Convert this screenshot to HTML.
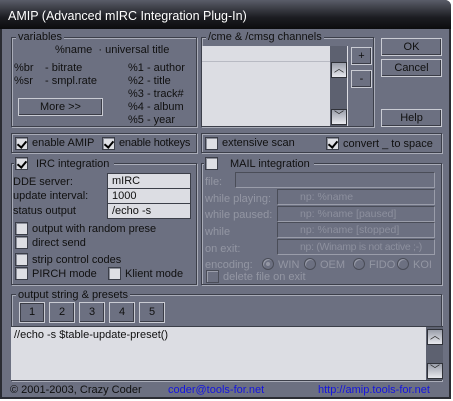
<!DOCTYPE html><html><head><style>
*{margin:0;padding:0;box-sizing:border-box}
body{width:453px;height:401px;background:#fff;position:relative;overflow:hidden;font-family:"Liberation Sans",sans-serif;font-size:11px;color:#101010}
.a{position:absolute}
#win{left:0;top:0;width:451px;height:399px;background:#6c7081;border:2px solid #2a2c33;border-radius:0 6px 0 0}
#title{left:0;top:0;width:451px;height:29px;background:linear-gradient(#5a5d69,#1c1d22 60%,#0c0c0e);color:#fff;font-size:12.5px;padding:9px 0 0 8px;border-radius:0 6px 0 0}
.g{position:absolute;border:1px solid #3c3f4a;box-shadow:inset 1px 1px 0 #a9acb8,1px 1px 0 #a9acb8}
.l{position:absolute;background:#6c7081;padding:0 2px;line-height:12px}
.t{position:absolute;white-space:nowrap;line-height:13px}
.cb{position:absolute;width:13px;height:13px;background:#dedfe4;border:1px solid #3b3e48;box-shadow:inset 1px 1px 0 #8c8f9a}
.cb.k::after{content:"";position:absolute;left:3px;top:1px;width:4px;height:7px;border:solid #000;border-width:0 2px 2px 0;transform:rotate(40deg)}
.cb.d{background:#6c7081;border-color:#4a4d58;box-shadow:inset 1px 1px 0 #9a9daa}
.btn{position:absolute;border:1px solid #c9cbd3;box-shadow:inset -1px -1px 0 #3a3c46;text-align:center;line-height:16px;background:#6c7081}
.in{position:absolute;background:#dcdde3;border:1px solid #3b3e48;padding-left:4px;line-height:14px}
.di{position:absolute;border:1px solid #4a4d58;border-right-color:#9a9daa;border-bottom-color:#9a9daa;color:#8d909e;padding-left:22px;line-height:14px;font-size:10.5px;white-space:nowrap;overflow:hidden}
.dt{color:#9396a3}
.sb{position:absolute;background:#5d6170}
.ar{position:absolute;width:16px;height:16px;background:linear-gradient(#9a9eaa,#e8e9ee);border:1px solid #303239;color:#222;font-size:10px;text-align:center;line-height:14px}
.rd{position:absolute;width:12px;height:12px;border-radius:50%;border:1px solid #4a4d58;box-shadow:inset 1px 1px 0 #9a9daa}
</style></head><body>
<div class="a" id="win"></div>
<div class="a" id="title">AMIP (Advanced mIRC Integration Plug-In)</div>

<div class="g" style="left:11px;top:37px;width:186px;height:90px"></div>
<div class="l" style="left:16px;top:31px">variables</div>
<div class="t" style="left:55px;top:44px">%name &nbsp;· universal title</div>
<div class="t" style="left:14px;top:62px">%br</div><div class="t" style="left:45px;top:62px">- bitrate</div>
<div class="t" style="left:14px;top:75px">%sr</div><div class="t" style="left:45px;top:75px">- smpl.rate</div>
<div class="t" style="left:128px;top:62px">%1 - author</div>
<div class="t" style="left:128px;top:75px">%2 - title</div>
<div class="t" style="left:128px;top:88px">%3 - track#</div>
<div class="t" style="left:128px;top:101px">%4 - album</div>
<div class="t" style="left:128px;top:114px">%5 - year</div>
<div class="btn" style="left:18px;top:98px;width:85px;height:18px">More &gt;&gt;</div>

<div class="g" style="left:201px;top:37px;width:173px;height:90px"></div>
<div class="l" style="left:206px;top:31px">/cme &amp; /cmsg channels</div>
<div class="a" style="left:202px;top:46px;width:146px;height:80px;background:#dcdde3"></div>
<div class="a" style="left:202px;top:61px;width:128px;height:1px;background:#b8bac3"></div>
<div class="sb" style="left:330px;top:46px;width:17px;height:80px"></div>
<div class="ar" style="left:331px;top:62px">︿</div>
<div class="ar" style="left:331px;top:109px">﹀</div>
<div class="btn" style="left:351px;top:47px;width:21px;height:18px">+</div>
<div class="btn" style="left:351px;top:70px;width:21px;height:18px">-</div>
<div class="btn" style="left:381px;top:38px;width:61px;height:18px">OK</div>
<div class="btn" style="left:381px;top:59px;width:61px;height:18px">Cancel</div>
<div class="btn" style="left:381px;top:109px;width:61px;height:18px">Help</div>

<div class="g" style="left:11px;top:133px;width:186px;height:20px"></div>
<div class="cb k" style="left:15px;top:137px"></div><div class="t" style="left:32px;top:137px">enable AMIP</div>
<div class="cb k" style="left:102px;top:137px"></div><div class="t" style="left:119px;top:137px;letter-spacing:-0.2px">enable hotkeys</div>
<div class="g" style="left:201px;top:133px;width:241px;height:20px"></div>
<div class="cb" style="left:205px;top:137px"></div><div class="t" style="left:222px;top:137px">extensive scan</div>
<div class="cb k" style="left:326px;top:137px"></div><div class="t" style="left:343px;top:138px">convert _ to space</div>

<div class="g" style="left:11px;top:163px;width:186px;height:122px"></div>
<div class="a" style="left:14px;top:157px;width:100px;height:13px;background:#6c7081"></div>
<div class="cb k" style="left:15px;top:157px"></div><div class="t" style="left:36px;top:158px">IRC integration</div>
<div class="t" style="left:13px;top:176px">DDE server:</div>
<div class="t" style="left:13px;top:190px">update interval:</div>
<div class="t" style="left:13px;top:205px">status output</div>
<div class="in" style="left:107px;top:173px;width:84px;height:16px">mIRC</div>
<div class="in" style="left:107px;top:188px;width:84px;height:16px">1000</div>
<div class="in" style="left:107px;top:203px;width:84px;height:16px">/echo -s</div>
<div class="cb" style="left:15px;top:222px"></div><div class="t" style="left:32px;top:223px">output with random prese</div>
<div class="cb" style="left:15px;top:236px"></div><div class="t" style="left:32px;top:237px">direct send</div>
<div class="cb" style="left:15px;top:253px"></div><div class="t" style="left:32px;top:254px">strip control codes</div>
<div class="cb" style="left:15px;top:267px"></div><div class="t" style="left:32px;top:268px">PIRCH mode</div>
<div class="cb" style="left:108px;top:267px"></div><div class="t" style="left:125px;top:268px">Klient mode</div>

<div class="g" style="left:201px;top:163px;width:241px;height:122px"></div>
<div class="a" style="left:204px;top:157px;width:110px;height:13px;background:#6c7081"></div>
<div class="cb" style="left:205px;top:157px"></div><div class="t" style="left:230px;top:158px">MAIL integration</div>
<div class="t dt" style="left:205px;top:176px">file:</div>
<div class="di" style="left:235px;top:172px;width:200px;height:16px"></div>
<div class="t dt" style="left:205px;top:193px">while playing:</div>
<div class="di" style="left:277px;top:189px;width:158px;height:16px">np: %name</div>
<div class="t dt" style="left:205px;top:209px">while paused:</div>
<div class="di" style="left:277px;top:206px;width:158px;height:16px">np: %name [paused]</div>
<div class="t dt" style="left:205px;top:226px">while</div>
<div class="di" style="left:277px;top:222px;width:158px;height:16px">np: %name [stopped]</div>
<div class="t dt" style="left:205px;top:243px">on exit:</div>
<div class="di" style="left:277px;top:239px;width:158px;height:16px;letter-spacing:-0.3px">np: (Winamp is not active ;-)</div>
<div class="t dt" style="left:205px;top:259px">encoding:</div>
<div class="rd" style="left:262px;top:258px"></div><div class="a" style="left:266px;top:262px;width:4px;height:4px;border-radius:50%;background:#9396a3"></div>
<div class="t dt" style="left:278px;top:259px">WIN</div>
<div class="rd" style="left:304px;top:258px"></div><div class="t dt" style="left:320px;top:259px">OEM</div>
<div class="rd" style="left:353px;top:258px"></div><div class="t dt" style="left:369px;top:259px">FIDO</div>
<div class="rd" style="left:397px;top:258px"></div><div class="t dt" style="left:413px;top:259px">KOI</div>
<div class="cb d" style="left:206px;top:270px"></div><div class="t dt" style="left:223px;top:271px">delete file on exit</div>

<div class="g" style="left:11px;top:294px;width:431px;height:87px"></div>
<div class="l" style="left:16px;top:289px">output string &amp; presets</div>
<div class="btn" style="left:19px;top:302px;width:26px;height:21px;line-height:19px;box-shadow:inset 1px 1px 0 #3a3c46,inset -1px -1px 0 #3a3c46">1</div>
<div class="btn" style="left:49px;top:302px;width:26px;height:21px;line-height:19px">2</div>
<div class="btn" style="left:79px;top:302px;width:26px;height:21px;line-height:19px">3</div>
<div class="btn" style="left:109px;top:302px;width:26px;height:21px;line-height:19px">4</div>
<div class="btn" style="left:139px;top:302px;width:26px;height:21px;line-height:19px">5</div>
<div class="a" style="left:11px;top:326px;width:432px;height:54px;background:#dcdde3;border-top:1px solid #3b3e48;padding:2px 0 0 3px">//echo -s $table-update-preset()</div>
<div class="sb" style="left:426px;top:327px;width:17px;height:53px"></div>
<div class="ar" style="left:427px;top:329px">︿</div>
<div class="ar" style="left:427px;top:363px">﹀</div>

<div class="t" style="left:10px;top:384px;color:#101010">© 2001-2003, Crazy Coder</div>
<div class="t" style="left:168px;top:384px;color:#1515e0">coder@tools-for.net</div>
<div class="t" style="left:318px;top:384px;color:#1515e0">http://amip.tools-for.net</div>
</body></html>
